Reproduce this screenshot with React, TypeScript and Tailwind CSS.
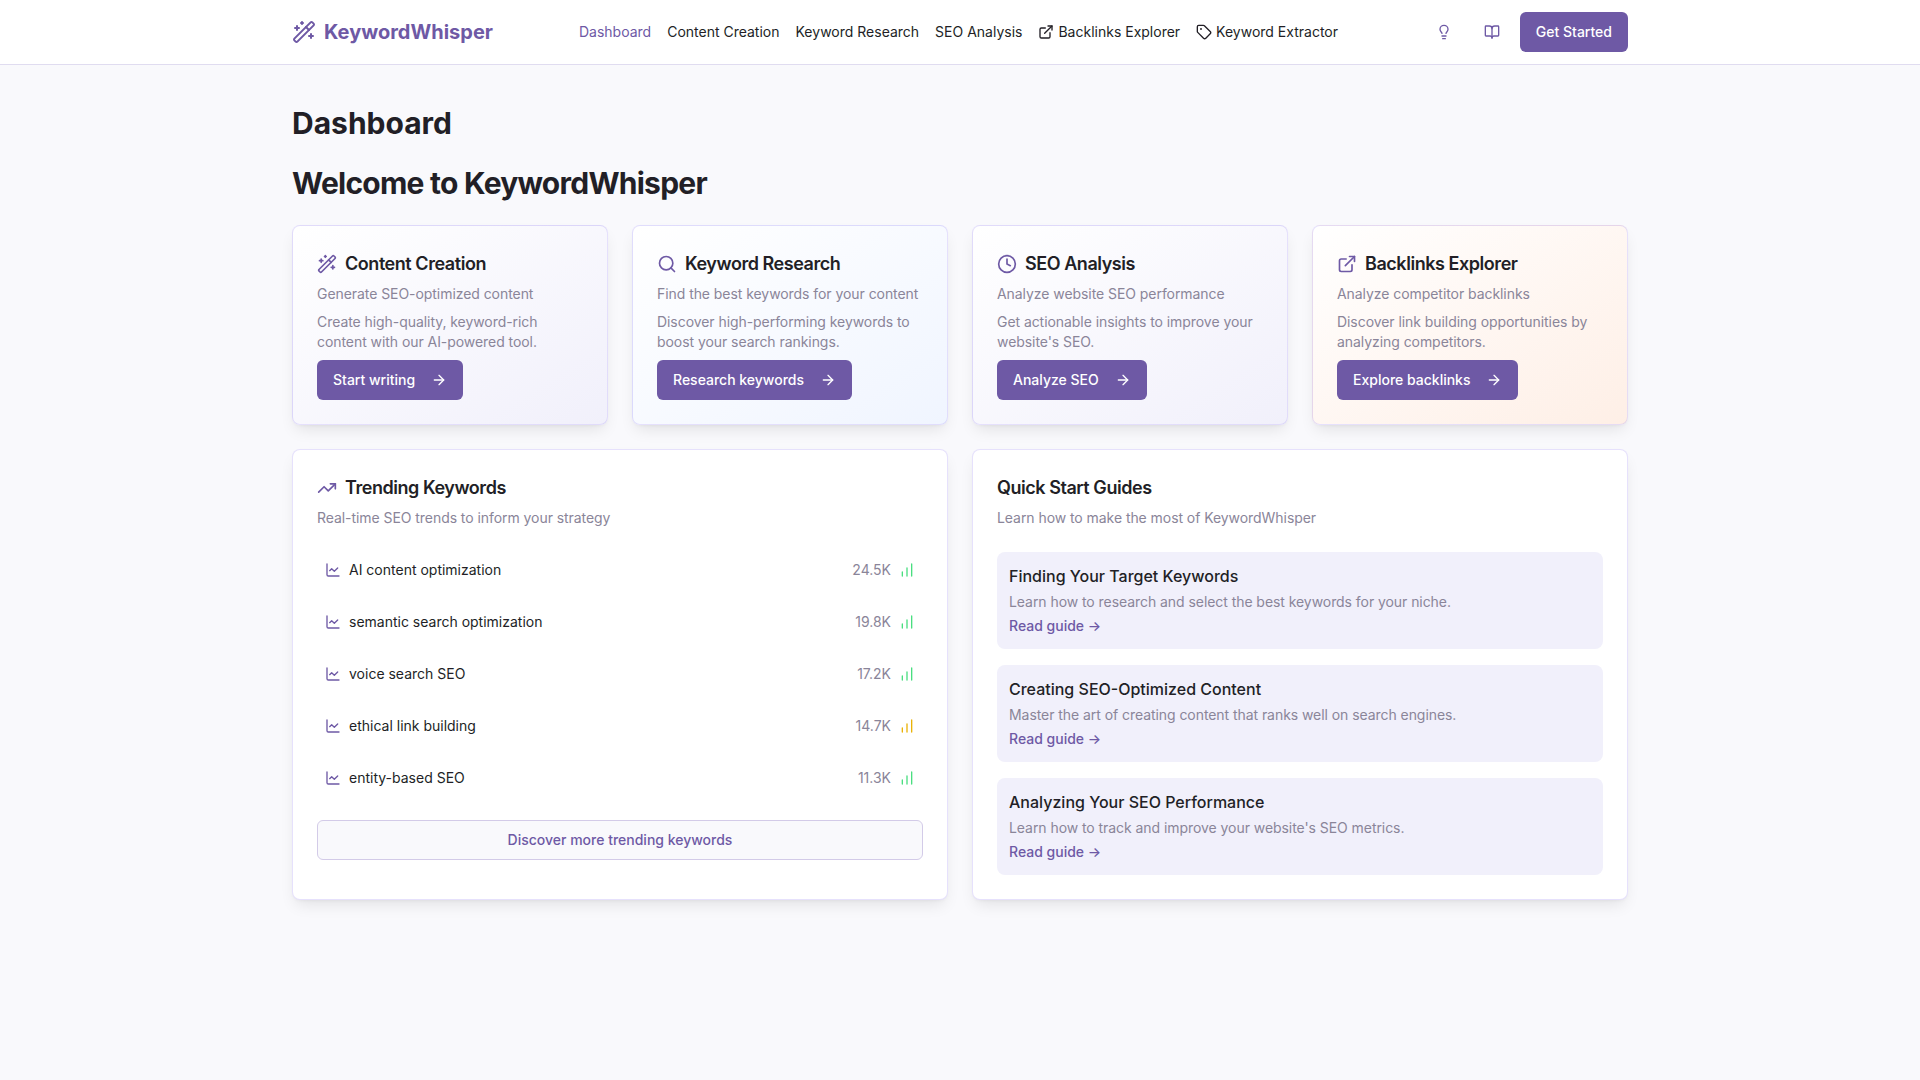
import { WandSparkles, Search, Clock, ExternalLink, TrendingUp, ChartLine, ChartNoAxesColumnIncreasing, ArrowRight, Lightbulb, BookOpen, Tag } from "lucide-react";

const features = [
  { icon: WandSparkles, title: "Content Creation", sub: "Generate SEO-optimized content", body: "Create high-quality, keyword-rich content with our AI-powered tool.", cta: "Start writing", bg: "bg-gradient-to-br from-white to-[#f1f0fb]" },
  { icon: Search, title: "Keyword Research", sub: "Find the best keywords for your content", body: "Discover high-performing keywords to boost your search rankings.", cta: "Research keywords", bg: "bg-gradient-to-br from-white to-[#f0f5ff]" },
  { icon: Clock, title: "SEO Analysis", sub: "Analyze website SEO performance", body: "Get actionable insights to improve your website's SEO.", cta: "Analyze SEO", bg: "bg-gradient-to-br from-white to-[#f1f0fb]" },
  { icon: ExternalLink, title: "Backlinks Explorer", sub: "Analyze competitor backlinks", body: "Discover link building opportunities by analyzing competitors.", cta: "Explore backlinks", bg: "bg-gradient-to-br from-white to-[#feefe6]" },
];

const keywords = [
  { name: "AI content optimization", vol: "24.5K", color: "text-[#4ade80]" },
  { name: "semantic search optimization", vol: "19.8K", color: "text-[#4ade80]" },
  { name: "voice search SEO", vol: "17.2K", color: "text-[#4ade80]" },
  { name: "ethical link building", vol: "14.7K", color: "text-[#eab308]" },
  { name: "entity-based SEO", vol: "11.3K", color: "text-[#4ade80]" },
];

const guides = [
  { title: "Finding Your Target Keywords", body: "Learn how to research and select the best keywords for your niche." },
  { title: "Creating SEO-Optimized Content", body: "Master the art of creating content that ranks well on search engines." },
  { title: "Analyzing Your SEO Performance", body: "Learn how to track and improve your website's SEO metrics." },
];

const card = "rounded-lg border border-[#9b87f5]/25 shadow-[0_8px_16px_-4px_rgba(0,0,0,0.1),0_2px_4px_-2px_rgba(0,0,0,0.06)]";
const muted = "text-sm tracking-[-0.06px] text-[#8a8599]";

export default function App() {
  return (
    <div className="min-h-screen bg-[#f9f9fc] font-[Inter,sans-serif] text-[#221f26]">
      <header className="h-[65px] border-b border-[#e0dcf0] bg-white">
        <div className="mx-auto flex h-16 max-w-[1400px] items-center px-8">
          <div className="flex items-center gap-2 text-[#6e59a5]">
            <WandSparkles size={24} />
            <span className="text-xl font-bold">KeywordWhisper</span>
          </div>
          <nav className="ml-[86px] flex items-center gap-4 text-sm">
            <span className="text-[#6e59a5]">Dashboard</span>
            <span>Content Creation</span>
            <span>Keyword Research</span>
            <span>SEO Analysis</span>
            <span className="flex items-center gap-1"><ExternalLink size={16} />Backlinks Explorer</span>
            <span className="flex items-center gap-1"><Tag size={16} />Keyword Extractor</span>
          </nav>
          <div className="ml-auto flex items-center gap-2">
            <span className="flex size-10 items-center justify-center text-[#6e59a5]"><Lightbulb size={16} /></span>
            <span className="flex size-10 items-center justify-center text-[#6e59a5]"><BookOpen size={16} /></span>
            <span className="flex h-10 items-center rounded-md bg-[#6e59a5] px-4 text-sm font-medium text-white">Get Started</span>
          </div>
        </div>
      </header>

      <main className="mx-auto max-w-[1400px] px-8 pt-10">
        <h1 className="text-3xl font-bold leading-9">Dashboard</h1>
        <h2 className="mt-6 text-3xl font-bold leading-9 tracking-tight">Welcome to KeywordWhisper</h2>

        <div className="mt-6 grid grid-cols-4 gap-6">
          {features.map((f) => (
            <div key={f.title} className={`${card} ${f.bg} p-6`}>
              <div className="flex items-center gap-2">
                <f.icon size={20} className="text-[#6e59a5]" />
                <h3 className="text-lg leading-7 font-semibold tracking-tight">{f.title}</h3>
              </div>
              <p className={`mt-1.5 ${muted}`}>{f.sub}</p>
              <p className={`mt-2 ${muted}`}>{f.body}</p>
              <button className="mt-2 flex h-10 items-center gap-2 rounded-md bg-[#6e59a5] px-4 text-sm font-medium text-white">
                {f.cta}
                <ArrowRight size={16} className="ml-2" />
              </button>
            </div>
          ))}
        </div>

        <div className="mt-6 grid grid-cols-2 gap-6">
          <section className={`${card} bg-white p-6`}>
            <div className="flex items-center gap-2">
              <TrendingUp size={20} className="text-[#6e59a5]" />
              <h3 className="text-lg leading-7 font-semibold tracking-tight">Trending Keywords</h3>
            </div>
            <p className={`mt-1.5 ${muted}`}>Real-time SEO trends to inform your strategy</p>
            <div className="mt-4">
              {keywords.map((k) => (
                <div key={k.name} className="flex h-[52px] items-center justify-between px-2">
                  <div className="flex items-center gap-2">
                    <ChartLine size={16} className="text-[#6e59a5]" />
                    <span className="text-sm">{k.name}</span>
                  </div>
                  <div className="flex items-center gap-2">
                    <span className="text-sm text-[#8a8599]">{k.vol}</span>
                    <ChartNoAxesColumnIncreasing size={16} className={k.color} />
                  </div>
                </div>
              ))}
            </div>
            <button className="mt-4 flex h-10 w-full items-center justify-center rounded-md border border-[#d3cbe8] bg-[#f9f9fc] text-sm font-medium text-[#6e59a5]">
              Discover more trending keywords
            </button>
          </section>

          <section className={`${card} bg-white p-6`}>
            <h3 className="text-lg leading-7 font-semibold tracking-tight">Quick Start Guides</h3>
            <p className={`mt-1.5 ${muted}`}>Learn how to make the most of KeywordWhisper</p>
            <div className="mt-6 flex flex-col gap-4">
              {guides.map((g) => (
                <div key={g.title} className="rounded-lg bg-[#f1f0fb] px-3 pt-3 pb-[13px]">
                  <h4 className="text-base font-medium">{g.title}</h4>
                  <p className={`mt-1 ${muted}`}>{g.body}</p>
                  <a className="mt-1 block text-sm font-medium text-[#6e59a5]">Read guide →</a>
                </div>
              ))}
            </div>
          </section>
        </div>
      </main>
    </div>
  );
}
